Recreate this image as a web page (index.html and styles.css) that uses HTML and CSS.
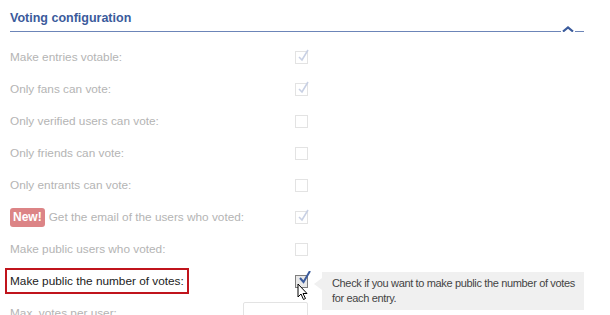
FILE: index.html
```html
<!DOCTYPE html>
<html>
<head>
<meta charset="utf-8">
<link rel="stylesheet" href="styles.css">
</head>
<body>
<div class="panel">
  <div class="header">
    <h2 class="title">Voting configuration</h2>
    <svg class="caret" width="12" height="6" viewBox="0 0 12 6"><path d="M1 5.5 L6 1.5 L11 5.5" fill="none" stroke="#3b5b9c" stroke-width="2.2"/></svg>
  </div>
  <div class="rows">
    <div class="row"><span class="label">Make entries votable:</span><span class="cb checked"><svg viewBox="0 0 14 14" width="14" height="14"><path d="M3 8 L6 11 L12 1" fill="none" stroke="#c8d0e4" stroke-width="1.6"/></svg></span></div>
    <div class="row"><span class="label">Only fans can vote:</span><span class="cb checked"><svg viewBox="0 0 14 14" width="14" height="14"><path d="M3 8 L6 11 L12 1" fill="none" stroke="#c8d0e4" stroke-width="1.6"/></svg></span></div>
    <div class="row"><span class="label">Only verified users can vote:</span><span class="cb"></span></div>
    <div class="row"><span class="label">Only friends can vote:</span><span class="cb"></span></div>
    <div class="row"><span class="label">Only entrants can vote:</span><span class="cb"></span></div>
    <div class="row"><span class="label"><span class="badge">New!</span> Get the email of the users who voted:</span><span class="cb checked"><svg viewBox="0 0 14 14" width="14" height="14"><path d="M3 8 L6 11 L12 1" fill="none" stroke="#c8d0e4" stroke-width="1.6"/></svg></span></div>
    <div class="row"><span class="label">Make public users who voted:</span><span class="cb"></span></div>
    <div class="row active">
      <span class="label"><span class="hl">Make public the number of votes:</span></span>
      <span class="cb on"><svg viewBox="0 0 14 14" width="14" height="14"><path d="M3 7 L6.5 11 L13 0" fill="none" stroke="#3b5b9c" stroke-width="2"/></svg></span>
      <svg class="cursor" width="12" height="18" viewBox="0 0 12 18"><path d="M1 1 L1 14 L4 11 L6.5 16.5 L8.5 15.5 L6 10.5 L10 10.5 Z" fill="#fff" stroke="#000" stroke-width="1"/></svg>
      <div class="tip">Check if you want to make public the number of votes for each entry.</div>
    </div>
    <div class="row last"><span class="label">Max. votes per user:</span><span class="input"></span></div>
  </div>
</div>
</body>
</html>
```

FILE: styles.css
```css
html, body { margin: 0; padding: 0; background: #fff; overflow: hidden; }
body { font-family: "Liberation Sans", Arial, sans-serif; }
.panel { width: 610px; height: 315px; overflow: hidden; }
.header {
  margin: 0 26px 0 10px;
  height: 31px;
  border-bottom: 1px solid #6c85b8;
  display: flex;
  align-items: flex-end;
  position: relative;
}
.title {
  margin: 0 0 6px 0;
  font-weight: bold;
  font-size: 12.5px;
  color: #3b5b9c;
}
.caret { position: absolute; right: 9px; bottom: -1px; background: #fff; padding: 0 1px; }
.rows { padding-top: 9px; }
.row {
  height: 32px;
  display: flex;
  align-items: center;
  position: relative;
  padding-left: 10px;
}
.label {
  width: 285px;
  flex: none;
  font-size: 11.8px;
  color: #b4b4b4;
  display: flex;
  align-items: center;
  gap: 4px;
  white-space: nowrap;
}
.badge {
  background: #dc8486;
  color: #fff;
  font-weight: bold;
  font-size: 12px;
  padding: 2px 3px;
  border-radius: 3px;
  line-height: 15px;
}
.cb {
  width: 11px; height: 11px;
  border: 1px solid #e3e3e3;
  position: relative;
  flex: none;
}
.cb svg { position: absolute; left: 0; top: -3px; }
.cb.on { border-color: #7f7f7f; background: #e8e8e8; }
.cb.on svg { left: 1px; top: -5px; }
.hl {
  color: #222;
  border: 2px solid #c0141c;
  margin-left: -5px;
  padding: 4px 3px 4px 3px;
  line-height: 14px;
}
.cursor { position: absolute; left: 297px; top: 18px; }
.tip {
  position: absolute;
  left: 322px;
  top: 7px;
  width: 251px;
  background: #f0f0f0;
  color: #444;
  font-size: 11px;
  letter-spacing: -0.35px;
  line-height: 15px;
  padding: 4px 1px 4px 10px;
}
.tip::before {
  content: "";
  position: absolute;
  left: -8px; top: 6px;
  border-style: solid;
  border-width: 6px 8px 6px 0;
  border-color: transparent #f0f0f0 transparent transparent;
}
.row.last { align-items: flex-start; }
.row.last .label { margin-top: 9px; }
.input {
  margin-left: -52px;
  margin-top: 5px;
  width: 63px;
  height: 30px;
  border: 1px solid #e3e3e3;
  border-radius: 2px;
}
```
